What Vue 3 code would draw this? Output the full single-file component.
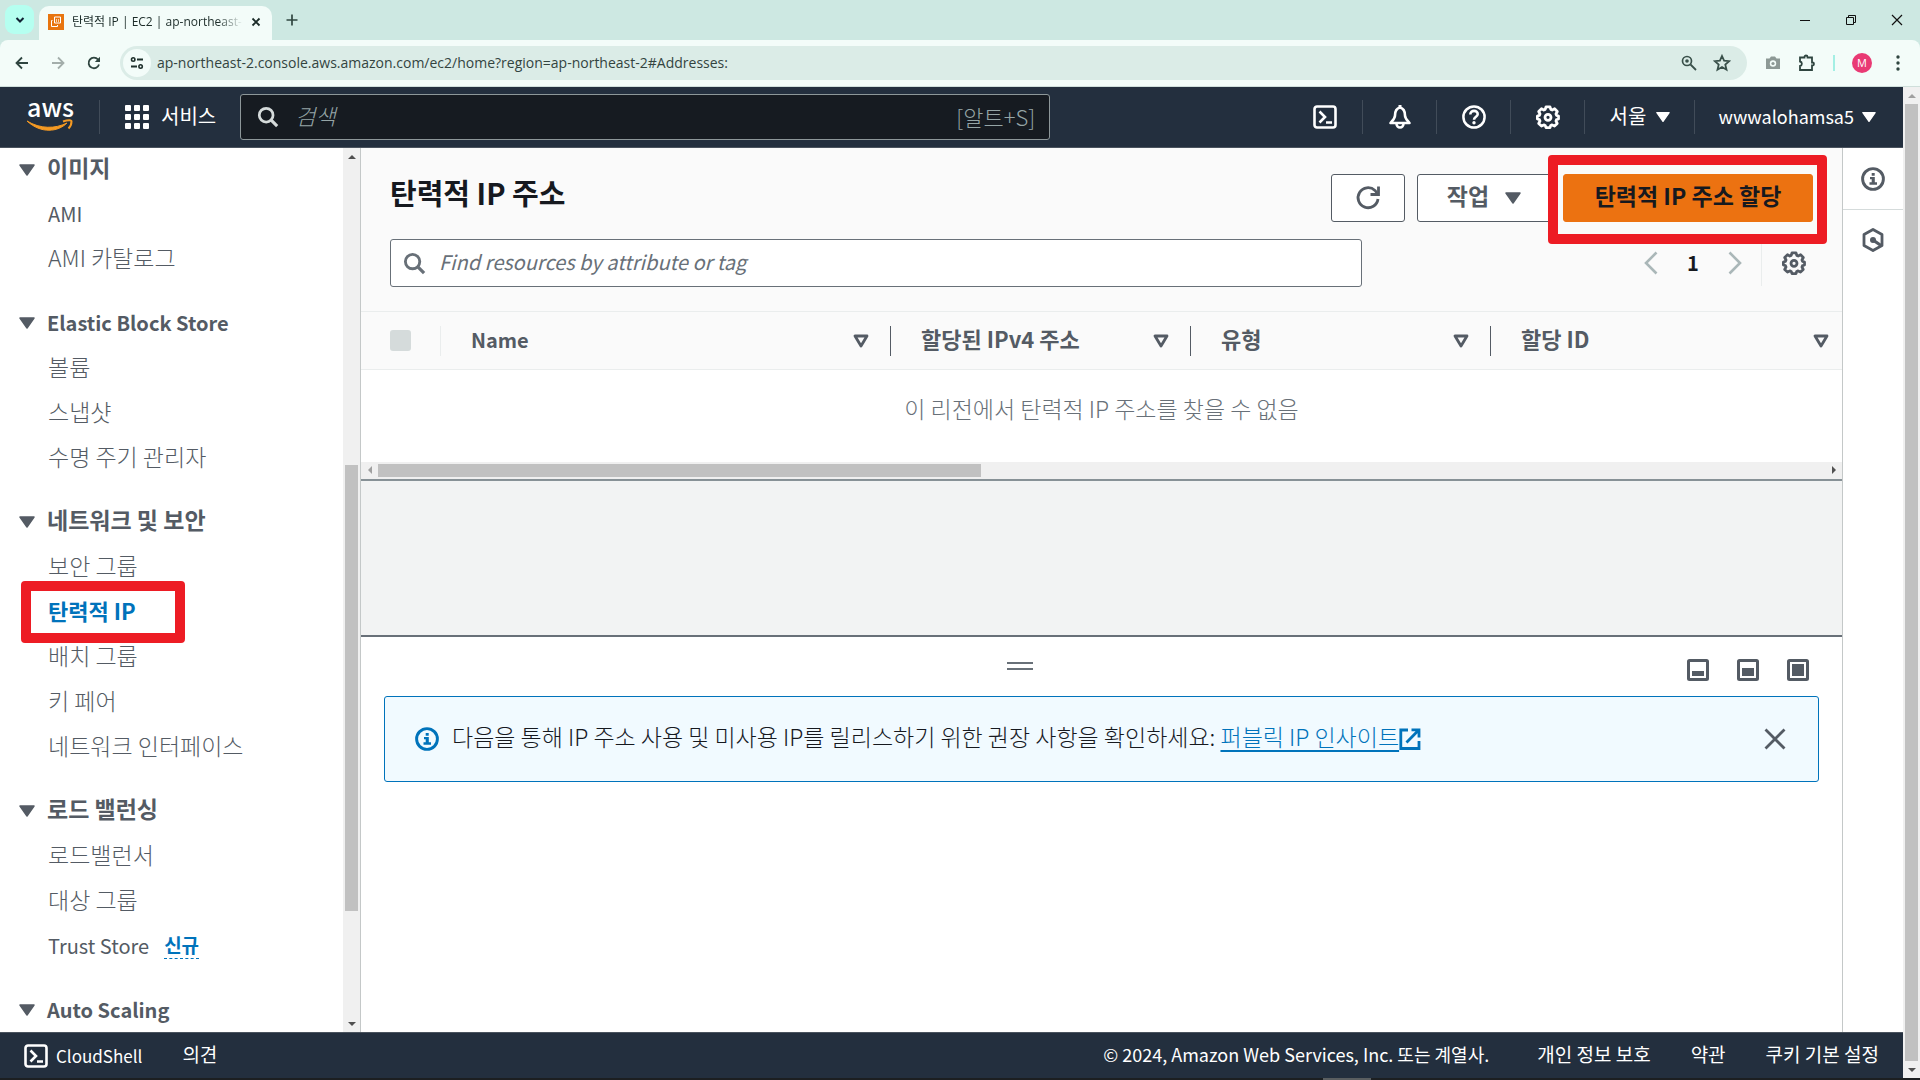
<template>
  <div class="screen">
    <svg class="sprite" aria-hidden="true">
      <symbol id="i-down" viewBox="0 0 16 12"><path d="M1 1h14L8 11z" fill="currentColor" stroke="currentColor" stroke-width="1.5" stroke-linejoin="round" /></symbol>
      <symbol id="i-search" viewBox="0 0 24 24"><circle cx="10" cy="10" r="7.5" fill="none" stroke="currentColor" stroke-width="3" /><path d="M15.5 15.5l6.5 6.5" stroke="currentColor" stroke-width="3.4" /></symbol>
      <symbol id="i-shell" viewBox="0 0 24 24"><rect x="1.5" y="1.5" width="21" height="21" rx="2.5" fill="none" stroke="currentColor" stroke-width="2.6" /><path d="M6.5 6.5l5.5 5.5-5.5 5.5M13 17.5h6" fill="none" stroke="currentColor" stroke-width="2.6" /></symbol>
      <symbol id="i-gear" viewBox="0 0 24 24"><path d="M10 1.8h4l.8 2.6 1.4.6 2.4-1.2 2.7 2.7L20 9l.5 1.4 2 .6v3l-2 .6L20 16l1.2 2.4-2.7 2.7-2.4-1.2-1.4.6-.7 2.1h-4l-.8-2.1-1.4-.6-2.3 1.2-2.8-2.7L4 16l-.6-1.4-2-.6v-3l2-.6L4 9 2.7 6.5l2.8-2.7L7.8 5l1.4-.6z" fill="none" stroke="currentColor" stroke-width="2.8" stroke-linejoin="round" /><circle cx="12" cy="12.3" r="3" fill="none" stroke="currentColor" stroke-width="2.8" /></symbol>
      <symbol id="i-info" viewBox="0 0 24 24"><circle cx="12" cy="12" r="10.4" fill="none" stroke="currentColor" stroke-width="2.9" /><path d="M10.7 6h3v2.7h-3zM9 10h4.8v5.3H16v2.4H8.5v-2.4h2.2v-3H9z" fill="currentColor" /></symbol>
    </svg>

    <header class="browser">
      <div class="tabs">
        <button class="tab-search" aria-label="탭 검색"><svg width="10" height="8" viewBox="0 0 10 8"><path d="M1.5 2L5 5.5 8.500 2" fill="none" stroke="#123" stroke-width="2" /></svg></button>
        <div class="tab">
          <svg width="16" height="16" viewBox="0 0 16 16"><rect width="16" height="16" fill="#e8750f" /><path d="M6.500 3h6v6h-6zM4.500 6.500h-1v6h6v-1.500" fill="none" stroke="#fff" stroke-width="1" /><path d="M8.500 5v3M10.500 5v3" stroke="#fbd2a8" /></svg>
          <span class="tab-title">탄력적 IP | EC2 | ap-northeast-</span>
          <button class="plain" aria-label="탭 닫기"><svg width="10" height="10" viewBox="0 0 10 10"><path d="M1.500 1.500l7 7M8.500 1.500l-7 7" stroke="#1b2b28" stroke-width="1.800" /></svg></button>
        </div>
        <button class="plain new-tab" aria-label="새 탭"><svg width="12" height="12" viewBox="0 0 12 12"><path d="M6 .5v11M.5 6h11" stroke="#2f4540" stroke-width="1.700" /></svg></button>
        <div class="window-buttons">
          <button class="plain" aria-label="최소화"><svg width="12" height="12" viewBox="0 0 12 12"><path d="M1 6.500h10" stroke="#111" /></svg></button>
          <button class="plain" aria-label="이전 크기로"><svg width="12" height="12" viewBox="0 0 12 12"><path d="M1.500 3.500h7v7h-7zM3.500 3.500v-2h7v7h-2" fill="none" stroke="#111" /></svg></button>
          <button class="plain" aria-label="닫기"><svg width="12" height="12" viewBox="0 0 12 12"><path d="M1 1l10 10M11 1L1 11" stroke="#111" stroke-width="1.200" /></svg></button>
        </div>
      </div>
      <div class="toolbar">
        <button class="plain nav-btn" aria-label="뒤로"><svg width="14" height="14" viewBox="0 0 14 14"><path d="M13 7H2M7 1.500L1.500 7 7 12.500" fill="none" stroke="#2f4540" stroke-width="1.800" /></svg></button>
        <button class="plain nav-btn" aria-label="앞으로"><svg width="14" height="14" viewBox="0 0 14 14"><path d="M1 7h11M7 1.500L12.500 7 7 12.500" fill="none" stroke="#a3aeab" stroke-width="1.800" /></svg></button>
        <button class="plain nav-btn" aria-label="새로고침"><svg width="14" height="14" viewBox="0 0 14 14"><path d="M12 8.500A5.300 5.300 0 1 1 11 3.500L12.500 5" fill="none" stroke="#2f4540" stroke-width="1.800" /><path d="M13 .8V6H7.800z" fill="#2f4540" /></svg></button>
        <div class="address">
          <span class="site-info"><svg width="14" height="14" viewBox="0 0 14 14"><path d="M7 3.500h6M1 10.500h6" stroke="#1f302c" stroke-width="1.800" /><circle cx="3.200" cy="3.500" r="1.700" fill="none" stroke="#1f302c" stroke-width="1.600" /><circle cx="10.600" cy="10.500" r="1.700" fill="none" stroke="#1f302c" stroke-width="1.600" /></svg></span>
          <input v-model="url" class="url" type="text" aria-label="주소창" spellcheck="false" />
          <button class="plain" aria-label="확대/축소"><svg width="16" height="16" viewBox="0 0 16 16"><circle cx="6" cy="6" r="4.500" fill="none" stroke="#39504a" stroke-width="1.700" /><circle cx="6" cy="6" r="1.800" fill="#39504a" /><path d="M9.500 9.500L15 15" stroke="#39504a" stroke-width="1.800" /></svg></button>
          <button class="plain" aria-label="북마크"><svg width="18" height="18" viewBox="0 0 18 18"><path d="M9 2l2.100 4.700 5.100.5-3.900 3.400 1.200 5.100L9 13l-4.500 2.700 1.200-5.100-3.900-3.400 5.100-.5z" fill="none" stroke="#39504a" stroke-width="1.800" /></svg></button>
        </div>
        <div class="extensions">
          <button class="plain" aria-label="캡처"><svg width="16" height="14" viewBox="0 0 16 14"><path d="M1 2.500h3.500L6 .5h4l1.500 2H15V13H1z" fill="#8d9996" /><circle cx="8" cy="7.500" r="3.200" fill="#f3fcf9" /><circle cx="8" cy="7.500" r="1.600" fill="#8d9996" /></svg></button>
          <button class="plain" aria-label="확장 프로그램"><svg width="18" height="18" viewBox="0 0 18 18"><path d="M2 3.500h4.500V3a1.500 1.500 0 0 1 3 0v.5H14v5h.5a1.500 1.500 0 0 1 0 3H14v4.500H2v-4c2.500-.5 2.500-4 0-4.500z" fill="none" stroke="#2f4540" stroke-width="1.800" /></svg></button>
          <span class="ext-divider"></span>
          <span class="avatar">M</span>
          <button class="plain" aria-label="메뉴"><svg width="4" height="16" viewBox="0 0 4 16" fill="#2f4540"><circle cx="2" cy="2" r="1.700" /><circle cx="2" cy="8" r="1.700" /><circle cx="2" cy="14" r="1.700" /></svg></button>
        </div>
      </div>
    </header>

    <div class="viewport">
      <div class="console">
        <nav class="topnav">
          <a class="logo" href="#" aria-label="AWS">
            <span>aws</span>
            <svg width="48" height="16" viewBox="0 0 48 16"><path d="M1 2c13 8 28 8 40 2-9 9-26 11-40-2z" fill="#f59a23" stroke="#f59a23" stroke-linejoin="round" /><path d="M37 2.500c6-2 8.500-1.500 8.500 0 0 2.500-1 5-3 7" fill="none" stroke="#f59a23" stroke-width="2" /></svg>
          </a>
          <button class="nav-services">
            <svg width="24" height="24" viewBox="0 0 24 24" fill="#fff"><template v-for="y in 3" :key="y"><rect v-for="x in 3" :key="x" :x="(x - 1) * 9" :y="(y - 1) * 9" width="6" height="6" rx="1" /></template></svg>
            <span>서비스</span>
          </button>
          <label class="global-search">
            <svg width="22" height="22"><use href="#i-search" /></svg>
            <input type="search" placeholder="검색" aria-label="검색" />
            <kbd>[알트+S]</kbd>
          </label>
          <div class="nav-right">
            <button aria-label="CloudShell"><svg width="24" height="24"><use href="#i-shell" /></svg></button>
            <button aria-label="알림"><svg width="26" height="26" viewBox="0 0 26 26"><path d="M13 3.500c-4 1-5 4-5 8 0 3-2.500 5-4.500 7.500h19c-2-2.500-4.500-4.500-4.500-7.500 0-4-1-7-5-8z" fill="none" stroke="#fff" stroke-width="2.600" stroke-linejoin="round" /><path d="M13 1v3" stroke="#fff" stroke-width="3" /><path d="M9.500 19.500a3.500 4 0 0 0 7 0" fill="none" stroke="#fff" stroke-width="2.600" /></svg></button>
            <button aria-label="도움말"><svg width="24" height="24" viewBox="0 0 24 24"><circle cx="12" cy="12" r="10.600" fill="none" stroke="#fff" stroke-width="2.500" /><path d="M8.300 9.500c0-5 7.600-4.600 7.400-.2-.1 2.500-3.700 2.600-3.700 5.500" fill="none" stroke="#fff" stroke-width="2.600" /><circle cx="12" cy="17.700" r="1.700" fill="#fff" /></svg></button>
            <button aria-label="설정"><svg width="24" height="24"><use href="#i-gear" /></svg></button>
            <button class="region"><span>서울</span><svg width="14" height="12"><use href="#i-down" /></svg></button>
            <button class="account"><span>wwwalohamsa5</span><svg width="14" height="12"><use href="#i-down" /></svg></button>
          </div>
        </nav>

        <div class="body">
          <aside class="sidebar">
            <nav class="side-list">
              <section v-for="group in groups" :key="group.title">
                <h2><svg width="16" height="12"><use href="#i-down" /></svg><span :class="{ ko: isKorean(group.title) }">{{ group.title }}</span></h2>
                <ul>
                  <li v-for="item in group.items" :key="item.name" :class="{ active: item.active }">
                    <a href="#" :class="{ ko: isKorean(item.name) }">{{ item.name }}</a>
                    <a v-if="item.badge" href="#" class="badge">{{ item.badge }}</a>
                    <span v-if="item.active" class="mark"></span>
                  </li>
                </ul>
              </section>
            </nav>
            <div class="scroll side-scroll">
              <i class="arrow up"></i><i class="before"></i><i class="thumb"></i><i class="after"></i><i class="arrow down"></i>
            </div>
          </aside>

          <main class="main">
            <section class="panel">
              <div class="panel-head">
                <h1>탄력적 IP 주소</h1>
                <div class="actions">
                  <button class="btn refresh" aria-label="새로고침"><svg width="26" height="26" viewBox="0 0 26 26"><path d="M23 14a10 10 0 1 1-3-8.500l2 2.500" fill="none" stroke="currentColor" stroke-width="2.800" /><path d="M23.500 1.500v8h-8" fill="none" stroke="currentColor" stroke-width="2.800" /></svg></button>
                  <button class="btn menu"><span>작업</span><svg width="16" height="14"><use href="#i-down" /></svg></button>
                  <div class="primary-wrap">
                    <button class="btn primary"><span>탄력적 IP 주소 할당</span></button>
                    <span class="mark"></span>
                  </div>
                </div>
              </div>
              <div class="filter-row">
                <label class="filter">
                  <svg width="23" height="23"><use href="#i-search" /></svg>
                  <input v-model="query" type="search" placeholder="Find resources by attribute or tag" aria-label="리소스 필터" />
                </label>
                <div class="pager">
                  <button class="plain" aria-label="이전 페이지"><svg width="14" height="24" viewBox="0 0 14 24"><path d="M12.500 1.500L2 12l10.500 10.500" fill="none" stroke="#aab7b8" stroke-width="2.600" /></svg></button>
                  <span>1</span>
                  <button class="plain" aria-label="다음 페이지"><svg width="14" height="24" viewBox="0 0 14 24"><path d="M1.500 1.500L12 12 1.500 22.500" fill="none" stroke="#aab7b8" stroke-width="2.600" /></svg></button>
                  <button class="plain prefs" aria-label="기본 설정"><svg width="24" height="24"><use href="#i-gear" /></svg></button>
                </div>
              </div>
              <table>
                <colgroup><col class="c-check" /><col class="c-name" /><col class="c-mid" /><col class="c-mid" /><col /></colgroup>
                <thead>
                  <tr>
                    <th class="check"><div><input type="checkbox" disabled aria-label="모두 선택" /></div></th>
                    <th v-for="col in columns" :key="col">
                      <div><span :class="{ ko: isKorean(col) }">{{ col }}</span><svg width="16" height="14" viewBox="0 0 16 14"><path d="M2 2h12L8 12z" fill="none" stroke="currentColor" stroke-width="2.800" stroke-linejoin="round" /></svg></div>
                    </th>
                  </tr>
                </thead>
                <tbody><tr><td colspan="5">이 리전에서 탄력적 IP 주소를 찾을 수 없음</td></tr></tbody>
              </table>
              <div class="scroll h-scroll"><i class="arrow left"></i><i class="thumb"></i><i class="after"></i><i class="arrow right"></i></div>
            </section>

            <div class="gap-area"></div>

            <section class="split">
              <div class="split-head">
                <button class="plain handle" aria-label="크기 조정"></button>
                <div class="split-sizes">
                  <button v-for="s in sizes" :key="s.label" class="plain" :aria-label="s.label">
                    <svg width="22" height="22" viewBox="0 0 22 22"><rect x="1.500" y="1.500" width="19" height="19" rx="1" fill="none" stroke="currentColor" stroke-width="3" /><rect x="5" :y="17 - s.h" width="12" :height="s.h" fill="currentColor" /></svg>
                  </button>
                </div>
              </div>
              <div class="notice">
                <svg width="24" height="24"><use href="#i-info" /></svg>
                <p>다음을 통해 IP 주소 사용 및 미사용 IP를 릴리스하기 위한 권장 사항을 확인하세요: <a href="#">퍼블릭 IP 인사이트</a><svg class="external" width="22" height="22" viewBox="0 0 22 22"><path d="M9 2H1.800v18.500H20V13" fill="none" stroke="currentColor" stroke-width="2.800" /><path d="M12.500 1.800H20V9.500M19.500 2.300L7.500 14.500" fill="none" stroke="currentColor" stroke-width="2.800" /></svg></p>
                <button class="plain" aria-label="닫기"><svg width="22" height="22" viewBox="0 0 22 22"><path d="M1.500 1.500l19 19M20.500 1.500l-19 19" stroke="currentColor" stroke-width="2.800" /></svg></button>
              </div>
            </section>
          </main>

          <aside class="rail">
            <button class="plain" aria-label="정보"><svg width="24" height="24"><use href="#i-info" /></svg></button>
            <button class="plain" aria-label="도구"><svg width="24" height="24" viewBox="0 0 24 24"><path d="M12 1.500l9 5v11l-9 5-9-5v-11z" fill="none" stroke="currentColor" stroke-width="2.800" stroke-linejoin="round" /><circle cx="12" cy="12" r="3" fill="currentColor" /><path d="M12 12l8 5.500" stroke="currentColor" stroke-width="3.200" /></svg></button>
          </aside>
        </div>

        <footer class="footer">
          <button class="shell"><svg width="24" height="24"><use href="#i-shell" /></svg>CloudShell</button>
          <a href="#">의견</a>
          <span class="copyright">© 2024, Amazon Web Services, Inc. 또는 계열사.</span>
          <a v-for="link in footerLinks" :key="link" href="#">{{ link }}</a>
        </footer>
      </div>
      <div class="scroll page-scroll">
        <i class="arrow up"></i><i class="thumb"></i><i class="arrow down"></i>
      </div>
    </div>
    <div class="taskbar"><i></i></div>
  </div>
</template>

<script setup>
import { ref } from 'vue';

const url = ref('ap-northeast-2.console.aws.amazon.com/ec2/home?region=ap-northeast-2#Addresses:');
const query = ref('');

const groups = [
  { title: '이미지', items: [{ name: 'AMI' }, { name: 'AMI 카탈로그' }] },
  { title: 'Elastic Block Store', items: [{ name: '볼륨' }, { name: '스냅샷' }, { name: '수명 주기 관리자' }] },
  {
    title: '네트워크 및 보안',
    items: [
      { name: '보안 그룹' },
      { name: '탄력적 IP', active: true },
      { name: '배치 그룹' },
      { name: '키 페어' },
      { name: '네트워크 인터페이스' }
    ]
  },
  { title: '로드 밸런싱', items: [{ name: '로드밸런서' }, { name: '대상 그룹' }, { name: 'Trust Store', badge: '신규' }] },
  { title: 'Auto Scaling', items: [] }
];
const columns = ['Name', '할당된 IPv4 주소', '유형', '할당 ID'];
const sizes = [
  { label: '작게', h: 5 },
  { label: '중간', h: 8 },
  { label: '크게', h: 12 }
];
const footerLinks = ['개인 정보 보호', '약관', '쿠키 기본 설정'];

const isKorean = (text) => /[가-힣]/.test(text);
</script>

<style>
body { margin: 0; background: #fff; }
</style>

<style scoped>
* { box-sizing: border-box; }
.screen { height: 100vh; display: flex; flex-direction: column; overflow: hidden; font-family: "Noto Sans CJK KR", "Noto Sans", sans-serif; color: #545b64; }
.sprite { position: absolute; width: 0; height: 0; }
button, input, kbd { font: inherit; color: inherit; }
button { border: 0; padding: 0; background: none; cursor: pointer; }
input { border: 0; padding: 0; background: none; outline: 0; min-width: 0; }
a { color: inherit; text-decoration: none; }
svg { flex: none; display: block; }
h1, h2, ul, p { margin: 0; padding: 0; list-style: none; }
.plain { display: grid; place-items: center; }

/* browser frame */
.browser { flex: none; background: #cde8e2; font-family: "Open Sans", "Noto Sans CJK KR", sans-serif; }
.tabs { height: 40px; display: flex; align-items: flex-end; padding-left: 5px; }
.tab-search { width: 29px; height: 29px; margin-bottom: 6px; border-radius: 9px; background: #b5fff0; display: grid; place-items: center; }
.tab { width: 233px; height: 34px; margin-left: 5px; padding: 0 11px 2px 9px; display: flex; align-items: center; gap: 8px; border-radius: 10px 10px 0 0; background: #f3fcf9; }
.tab-title { flex: 1; white-space: nowrap; font-size: 12px; line-height: 20px; color: #1b2b28; -webkit-mask-image: linear-gradient(90deg, #000 85%, transparent); mask-image: linear-gradient(90deg, #000 85%, transparent); }
.new-tab { width: 40px; height: 40px; }
.window-buttons { margin-left: auto; display: flex; }
.window-buttons button { width: 46px; height: 40px; }
.toolbar { height: 47px; display: flex; align-items: center; padding: 0 20px 0 4px; background: #f3fcf9; border-bottom: 1px solid #cfdfdb; border-radius: 8px 8px 0 0; }
.nav-btn { width: 36px; height: 34px; }
.address { flex: 1; height: 34px; margin-left: 8px; padding: 0 16px 0 3px; display: flex; align-items: center; gap: 16px; border-radius: 17px; background: #dbece7; }
.site-info { width: 28px; height: 28px; border-radius: 50%; background: #f3fcf9; display: grid; place-items: center; }
.url { flex: 1; margin-left: -10px; font-size: 14px; line-height: 20px; color: #33443f; }
.extensions { display: flex; align-items: center; gap: 17px; padding-left: 18px; }
.ext-divider { width: 2px; height: 16px; background: #a3efe4; }
.avatar { width: 20px; height: 20px; border-radius: 50%; background: #e93a74; color: #fff; font-size: 11px; line-height: 20px; text-align: center; }
.extensions > .plain:last-child { padding-left: 7px; }

.viewport { flex: 1; min-height: 0; display: flex; }
.console { flex: 1; min-width: 0; display: flex; flex-direction: column; }

/* top navigation */
.topnav { flex: none; height: 61px; display: flex; align-items: center; background: #232f3e; border-bottom: 1px solid #4a535e; color: #fff; font-size: 20px; }
.logo { width: 100px; height: 34px; padding-left: 26px; border-right: 1px solid #414c59; }
.logo span { display: block; height: 17px; padding-left: 1px; font-size: 25px; line-height: 12px; font-weight: 500; }
.logo svg { margin-top: 2px; }
.nav-services { display: flex; align-items: center; gap: 12px; padding: 0 24px 0 25px; line-height: 28px; }
.nav-services span, .region span, .account span { padding-bottom: 3px; }
.global-search { flex: 0 1 810px; height: 46px; padding: 0 14px 0 16px; display: flex; align-items: center; gap: 16px; border: 1px solid #8d9799; border-radius: 3px; background: #161b21; color: #95a5a6; }
.global-search svg { color: #d5dbdb; }
.global-search input { flex: 1; padding-bottom: 4px; font-size: 22px; font-style: italic; font-weight: 300; }
.global-search kbd { padding-bottom: 2px; font-size: 22px; line-height: 30px; font-weight: 300; }
input::placeholder { color: inherit; opacity: 1; }
.nav-right { margin-left: auto; display: flex; align-items: center; }
.nav-right button { min-width: 74px; height: 34px; display: flex; align-items: center; justify-content: center; gap: 10px; line-height: 28px; border-left: 1px solid #414c59; }
.nav-right button:first-child { border-left: 0; }
.nav-right .region { width: 110px; }
.nav-right .account { gap: 8px; padding: 0 27px 0 23px; font-size: 18px; }

.body { flex: 1; min-height: 0; display: flex; background: #fff; }

/* side navigation */
.sidebar { flex: none; width: 361px; display: flex; border-right: 1px solid #c4c8c8; }
.side-list { flex: 1; min-width: 0; overflow: hidden; font-size: 20px; line-height: 30px; }
.side-list section { margin-bottom: 19px; }
.side-list h2 { height: 45px; padding-left: 19px; display: flex; align-items: center; gap: 12px; font-size: 20px; font-weight: 700; }
.side-list section:first-child h2 { height: 43px; }
.side-list li { position: relative; height: 45px; padding-left: 48px; display: flex; align-items: center; gap: 15px; }
.side-list .ko { padding-bottom: 3px; font-size: 23px; }
.side-list h2 .ko { padding-bottom: 5px; }
.side-list li .ko { font-weight: 300; }
.side-list li.active .ko { color: #0073bb; font-weight: 700; font-size: 22px; }
.badge { color: #0073bb; font-size: 19px; line-height: 26px; font-weight: 700; border-bottom: 1px dashed #0073bb; }
.mark { position: absolute; border: 10px solid #ed1c24; border-radius: 4px; pointer-events: none; }
.side-list .mark { left: 21px; top: -8px; width: 164px; height: 62px; }

/* scrollbars */
.scroll { flex: none; display: flex; align-items: center; background: #f0f0f0; }
.scroll .thumb { background: #c1c1c1; }
.side-scroll, .page-scroll { width: 17px; flex-direction: column; }
.side-scroll .thumb, .page-scroll .thumb { width: 13px; }
.arrow { flex: none; width: 17px; height: 17px; display: grid; place-items: center; }
.arrow::before { content: ""; border: 4px solid transparent; }
.arrow.up::before { border-top: 0; border-bottom-color: #505050; }
.arrow.down::before { border-bottom: 0; border-top-color: #505050; }
.arrow.left::before { border-left: 0; border-right-color: #a0a0a0; }
.arrow.right::before { border-right: 0; border-left-color: #505050; }
.side-scroll .before { flex: 300; }
.side-scroll .thumb { flex: 445; }
.side-scroll .after { flex: 104; }
.page-scroll .thumb { flex: 1; }
.page-scroll .up::before { border-bottom-color: #a0a0a0; }
.h-scroll { height: 17px; }
.h-scroll .thumb { flex: 603; height: 13px; }
.h-scroll .after { flex: 844; }

/* table panel */
.main { flex: 1; min-width: 0; display: flex; flex-direction: column; }
.panel { background: #fafafa; }
.panel-head { display: flex; align-items: center; justify-content: space-between; padding: 26px 29px 0; }
h1 { font-size: 29px; line-height: 36px; font-weight: 700; color: #16191f; padding-bottom: 12px; }
.actions { display: flex; gap: 12px; }
.btn { height: 48px; display: flex; align-items: center; justify-content: center; border: 1px solid #545b64; border-radius: 3px; background: #fff; font-size: 23px; line-height: 30px; font-weight: 700; }
.btn span { padding-bottom: 6px; }
.refresh { width: 74px; }
.menu { width: 134px; gap: 16px; }
.primary-wrap { position: relative; }
.primary { width: 250px; border-color: #ec7211; background: #ec7211; color: #16191f; }
.primary-wrap .mark { inset: -19px -14px -22px -15px; }
.filter-row { display: flex; align-items: center; justify-content: space-between; gap: 24px; padding: 17px 29px 24px; }
.filter { flex: 0 1 972px; height: 48px; display: flex; align-items: center; gap: 13px; padding: 0 12px; border: 1px solid #687078; border-radius: 3px; background: #fff; color: #687078; }
.filter input { flex: 1; padding-bottom: 2px; font-size: 20px; font-style: italic; line-height: 30px; }
.pager { display: flex; align-items: center; color: #16191f; font-size: 20px; line-height: 30px; font-weight: 700; }
.pager span { width: 70px; text-align: center; }
.prefs { width: 52px; height: 46px; margin-left: 19px; padding-left: 12px; border-left: 1px solid #eaeded; color: #545b64; }
table { width: 100%; table-layout: fixed; border-collapse: collapse; }
.c-check { width: 80px; }
.c-name { width: 450px; }
.c-mid { width: 300px; }
th { height: 58px; padding: 0; border-top: 1px solid #eaeded; border-bottom: 1px solid #eaeded; font-size: 20px; line-height: 30px; font-weight: 700; text-align: left; }
th div { height: 30px; padding: 0 21px 0 30px; display: flex; align-items: center; justify-content: space-between; border-right: 1px solid #545b64; }
th span { padding-bottom: 2px; }
th .ko { padding-bottom: 6px; font-size: 22px; }
th:last-child div { border-right: 0; padding-right: 13px; }
th.check div { padding: 0 0 0 29px; border-color: #eaeded; }
th input { appearance: none; width: 21px; height: 21px; margin: 0; border-radius: 3px; background: #d5dbdb; }
td { height: 92px; padding: 0 0 16px; background: #fff; text-align: center; font-size: 23px; line-height: 30px; font-weight: 300; color: #687078; }
.gap-area { flex: none; height: 158px; background: #f2f3f3; border-top: 2px solid #879196; border-bottom: 2px solid #687078; }

/* split panel */
.split { padding: 0 23px; }
.split-head { height: 59px; display: flex; align-items: center; }
.handle { width: 26px; height: 8px; margin-left: auto; border-top: 2px solid #687078; border-bottom: 2px solid #687078; }
.split-sizes { flex: 0 0 50%; display: flex; justify-content: flex-end; gap: 28px; padding: 8px 10px 0 0; margin-left: 69px; }
.notice { min-height: 86px; display: flex; align-items: center; gap: 13px; padding: 0 32px 0 30px; border: 1px solid #0073bb; border-radius: 3px; background: #f1faff; }
.notice > svg { color: #0073bb; }
.notice p { flex: 1; padding-bottom: 6px; font-size: 23px; line-height: 30px; font-weight: 300; color: #16191f; }
.notice a { color: #0073bb; text-decoration: underline; text-underline-offset: 4px; }
.external { display: inline-block; vertical-align: -4px; color: #0073bb; }

.rail { flex: none; width: 61px; border-left: 1px solid #c4c8c8; }
.rail button { width: 100%; height: 60px; }
.rail button:first-child { height: 62px; border-bottom: 1px solid #d5dbdb; }

.footer { flex: none; height: 46px; display: flex; align-items: center; gap: 40px; padding: 0 24px; background: #232f3e; border-top: 1px solid #4a535e; color: #fff; font-size: 19px; line-height: 26px; }
.footer a { padding-bottom: 4px; }
.shell { display: flex; align-items: center; gap: 8px; font-size: 17px; }
.copyright { margin-left: auto; margin-right: 8px; padding-bottom: 3px; font-size: 18px; }
.taskbar { flex: none; height: 2px; background: #1c1f21; display: flex; justify-content: center; }
.taskbar i { width: 48px; background: #5a5e60; margin-left: 774px; }
</style>
